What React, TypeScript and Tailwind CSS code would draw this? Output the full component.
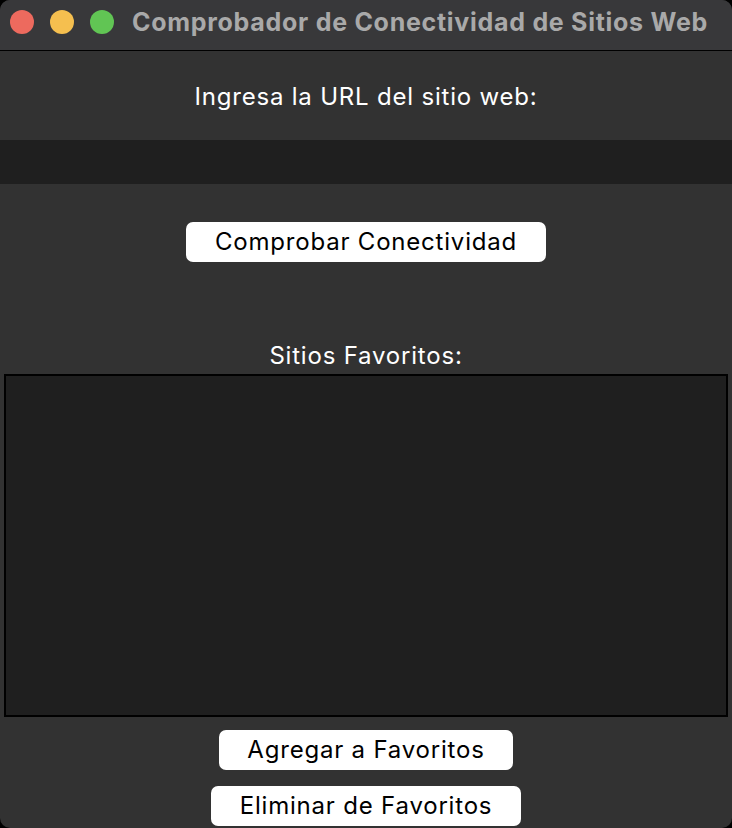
import React from "react";

export default function App() {
  const font = { fontFamily: "Inter, 'Liberation Sans', sans-serif" };

  return (
    <div className="w-[732px] h-[828px] bg-black overflow-hidden" style={font}>
      <div className="w-full h-full bg-[#323232] rounded-[10px] overflow-hidden flex flex-col">
        {/* barra de titulo */}
        <div className="h-[51px] shrink-0 bg-[#38383a] border-b border-black flex items-center pb-[6px]">
          <div className="flex items-center gap-[16px] pl-[10px]">
            <span className="w-[24px] h-[24px] rounded-full bg-[#ed6a5e]" />
            <span className="w-[24px] h-[24px] rounded-full bg-[#f5bf4f]" />
            <span className="w-[24px] h-[24px] rounded-full bg-[#61c554]" />
          </div>
          <div className="ml-[18px] text-[25px] font-bold text-[#a9a9a9] tracking-[0.72px] leading-none whitespace-nowrap">
            Comprobador de Conectividad de Sitios Web
          </div>
        </div>

        {/* contenido */}
        <div className="flex flex-col items-center text-[24px] tracking-[0.8px]">
          <div className="mt-[32px] h-[28px] text-white leading-[28px]">
            Ingresa la URL del sitio web:
          </div>
          <div className="mt-[29px] w-full h-[44px] bg-[#1f1f1f]" />
          <button className="mt-[38px] w-[360px] h-[40px] bg-white rounded-[7px] text-black leading-none">
            Comprobar Conectividad
          </button>
          <div className="mt-[80px] h-[28px] text-white leading-[28px]">
            Sitios Favoritos:
          </div>
          <div className="mt-[4px] w-[724px] h-[343px] bg-[#1f1f1f] border-2 border-black" />
          <button className="mt-[13px] w-[294px] h-[40px] bg-white rounded-[7px] text-black leading-none">
            Agregar a Favoritos
          </button>
          <button className="mt-[16px] w-[310px] h-[40px] bg-white rounded-[7px] text-black leading-none">
            Eliminar de Favoritos
          </button>
        </div>
      </div>
    </div>
  );
}
